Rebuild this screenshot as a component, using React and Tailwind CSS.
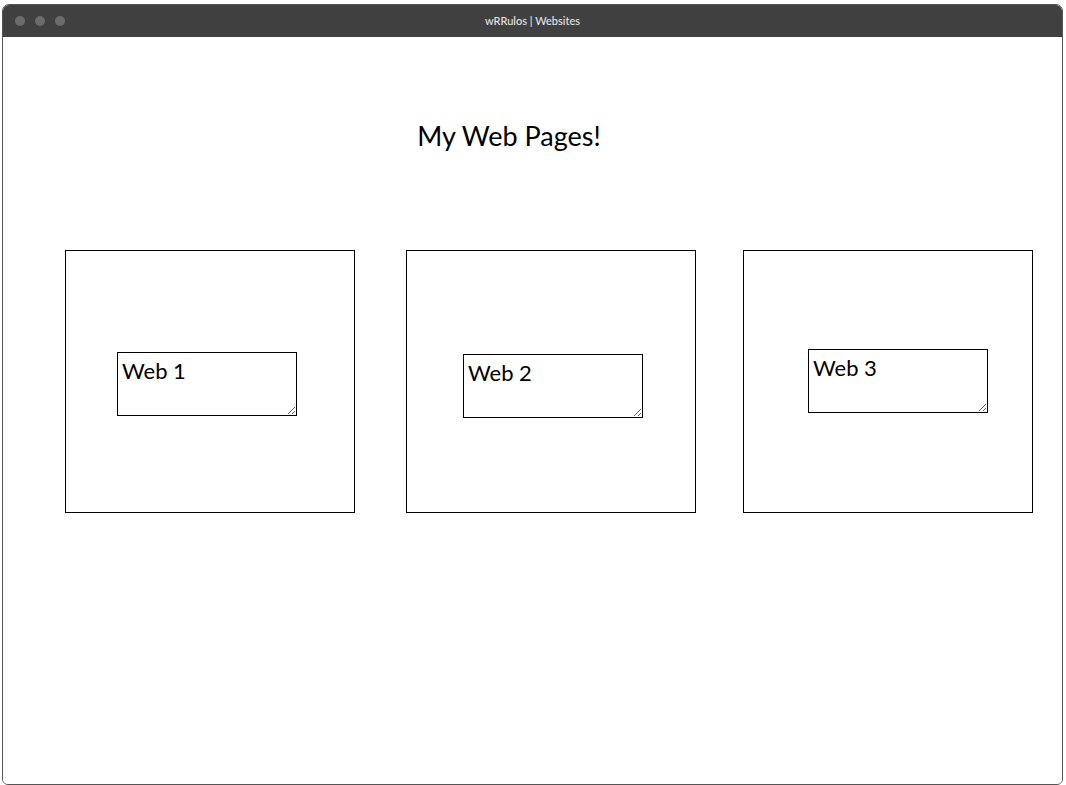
import React from 'react'

const font = { fontFamily: '"Lato", "Noto Sans", sans-serif' }

function Card({ label, className, boxClass }) {
  return (
    <div className={`w-[290px] h-[263px] border border-black shrink-0 ${className}`}>
      <textarea
        defaultValue={label}
        className={`block w-[180px] h-[64px] border border-black px-[4px] py-[3px] text-[22px] leading-[30px] text-black outline-none ${boxClass}`}
        style={font}
      />
    </div>
  )
}

export default function App() {
  return (
    <div className="w-[1066px] h-[785px] bg-white pt-[4px] pl-[2px] pr-[3px]">
      <div className="h-[781px] flex flex-col rounded-t-[7px] rounded-b-[6px] border border-[#555] overflow-hidden">
        {/* title bar */}
        <div className="h-[32px] bg-[#404040] flex items-center relative shrink-0">
          <div className="flex gap-[10px] pl-[12px]">
            <span className="w-[10px] h-[10px] rounded-full bg-[#6b6b6b]" />
            <span className="w-[10px] h-[10px] rounded-full bg-[#6b6b6b]" />
            <span className="w-[10px] h-[10px] rounded-full bg-[#6b6b6b]" />
          </div>
          <div className="absolute inset-0 flex items-center justify-center text-[11px] font-medium text-[#e4e4e4]" style={font}>
            wRRulos | Websites
          </div>
        </div>

        {/* content */}
        <div className="flex-1 bg-white">
          <h1 className="mt-[79px] pr-[47px] text-center text-[27px] leading-[40px] text-black" style={font}>
            My Web Pages!
          </h1>
          <div className="flex mt-[94px] pl-[62px]">
            <Card label="Web 1" className="" boxClass="mt-[101px] ml-[51px]" />
            <Card label="Web 2" className="ml-[51px]" boxClass="mt-[103px] ml-[56px]" />
            <Card label="Web 3" className="ml-[47px]" boxClass="mt-[98px] ml-[64px]" />
          </div>
        </div>
      </div>
    </div>
  )
}
